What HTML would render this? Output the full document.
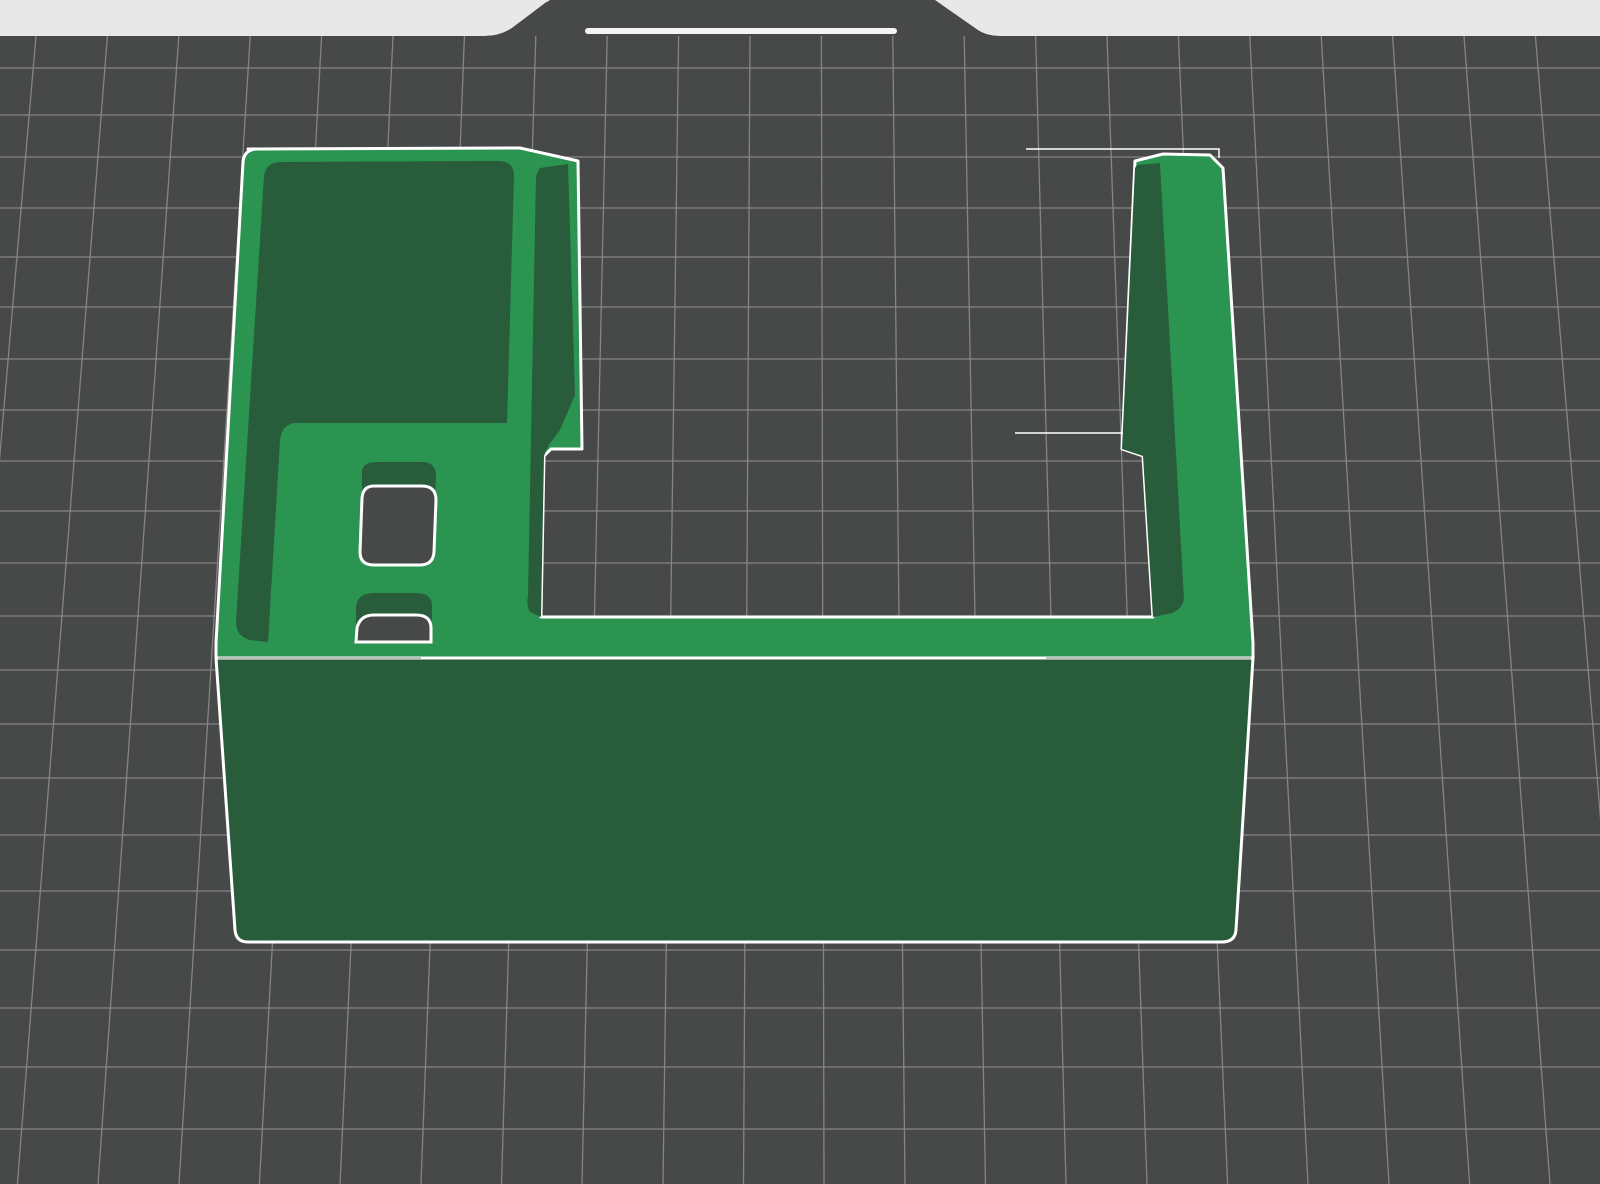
<!DOCTYPE html>
<html><head><meta charset="utf-8"><style>
html,body{margin:0;padding:0;background:#474848;width:1600px;height:1184px;overflow:hidden}
svg{display:block}
</style></head><body>
<svg width="1600" height="1184" viewBox="0 0 1600 1184" xmlns="http://www.w3.org/2000/svg">
<rect width="1600" height="1184" fill="#474848"/>
<g stroke="#8c8c8c" stroke-width="1.3" opacity="0.9">
<line x1="36" y1="36" x2="-63" y2="1184"/>
<line x1="107.4" y1="36" x2="17.4" y2="1184"/>
<line x1="178.8" y1="36" x2="98" y2="1184"/>
<line x1="250.2" y1="36" x2="179" y2="1184"/>
<line x1="321.6" y1="36" x2="259.4" y2="1184"/>
<line x1="393" y1="36" x2="340" y2="1184"/>
<line x1="464.4" y1="36" x2="421" y2="1184"/>
<line x1="535.8" y1="36" x2="501.5" y2="1184"/>
<line x1="607.2" y1="36" x2="582" y2="1184"/>
<line x1="678.6" y1="36" x2="663" y2="1184"/>
<line x1="750" y1="36" x2="743.5" y2="1184"/>
<line x1="821.4" y1="36" x2="824" y2="1184"/>
<line x1="892.8" y1="36" x2="905" y2="1184"/>
<line x1="964.2" y1="36" x2="985.5" y2="1184"/>
<line x1="1035.6" y1="36" x2="1066" y2="1184"/>
<line x1="1107" y1="36" x2="1147" y2="1184"/>
<line x1="1178.4" y1="36" x2="1227.6" y2="1184"/>
<line x1="1249.8" y1="36" x2="1308" y2="1184"/>
<line x1="1321.2" y1="36" x2="1389" y2="1184"/>
<line x1="1392.6" y1="36" x2="1469.6" y2="1184"/>
<line x1="1464" y1="36" x2="1550" y2="1184"/>
<line x1="1535.4" y1="36" x2="1631" y2="1184"/>
<line x1="0" y1="68" x2="1600" y2="68"/>
<line x1="0" y1="115" x2="1600" y2="115"/>
<line x1="0" y1="157" x2="1600" y2="157"/>
<line x1="0" y1="208" x2="1600" y2="208"/>
<line x1="0" y1="257" x2="1600" y2="257"/>
<line x1="0" y1="307" x2="1600" y2="307"/>
<line x1="0" y1="359" x2="1600" y2="359"/>
<line x1="0" y1="410" x2="1600" y2="410"/>
<line x1="0" y1="461" x2="1600" y2="461"/>
<line x1="0" y1="511" x2="1600" y2="511"/>
<line x1="0" y1="563" x2="1600" y2="563"/>
<line x1="0" y1="616" x2="1600" y2="616"/>
<line x1="0" y1="670" x2="1600" y2="670"/>
<line x1="0" y1="724" x2="1600" y2="724"/>
<line x1="0" y1="778" x2="1600" y2="778"/>
<line x1="0" y1="835" x2="1600" y2="835"/>
<line x1="0" y1="891" x2="1600" y2="891"/>
<line x1="0" y1="950" x2="1600" y2="950"/>
<line x1="0" y1="1008" x2="1600" y2="1008"/>
<line x1="0" y1="1067" x2="1600" y2="1067"/>
<line x1="0" y1="1129" x2="1600" y2="1129"/>
</g>
<path d="M0 0 H1600 V36 H1000 Q985 36 975 28 L935 0 H550 L512 28 Q500 36 485 36 H0 Z" fill="#e8e8e8"/>
<path d="M485 36 Q500 36 512 28 L545 3 Q549 0 555 0 H928 Q934 0 938 3 L975 28 Q985 36 1000 36 Z" fill="#474848"/>
<rect x="585" y="28" width="312" height="6" rx="3" fill="#f4f4f4"/>
<path d="M216 658 H1253 L1236 930 Q1235 942 1222 942 H248 Q236 942 235 930 Z" fill="#285c3b" stroke="#fff" stroke-width="3"/>
<path d="M248 149 L520 148 L578 161 L582 449 L551 449 L544 456 L541 617 L1153 617 L1143 456 L1122 449 L1135 161 L1163 154 L1210 155 L1223 168 L1253 643 L1253 658 L216 658 L216 643 L243 162 Q244 150 256 149 Z" fill="#2a9450" stroke="#fff" stroke-width="3" stroke-linejoin="round"/>
<path d="M282 162 L500 161 Q514 162 514 176 L507 423 L295 423 Q282 424 280 440 L268 642 L250 640 Q236 636 236 622 L264 176 Q266 162 282 162 Z" fill="#285c3b"/>
<path d="M540 168 L568 164 L575 395 L560 430 L548 446 L544 456 L541 617 L530 612 Q526 606 528 596 L536 176 Z" fill="#285c3b"/>
<path d="M1137 165 L1160 163 L1184 600 Q1180 612 1168 614 L1153 617 L1143 456 L1122 449 L1135 168 Z" fill="#285c3b"/>
<path d="M362 470 Q364 462 378 462 H422 Q436 462 436 476 L435 498 L362 498 Z" fill="#285c3b"/>
<path d="M374 486 H422 Q436 486 436 500 L434 552 Q433 565 420 565 H374 Q360 565 360 552 L362 498 Q363 486 374 486 Z" fill="#474848" stroke="#fff" stroke-width="3"/>
<path d="M356 606 Q358 593 374 593 H416 Q432 593 432 606 L432 628 L356 628 Z" fill="#285c3b"/>
<path d="M356 642 L357 628 Q360 615 374 615 H416 Q431 615 431 628 L431 642 Z" fill="#474848" stroke="#fff" stroke-width="3"/>
<line x1="218" y1="658" x2="421" y2="658" stroke="#bfbfbf" stroke-width="2"/>
<line x1="1046" y1="658" x2="1251" y2="658" stroke="#bfbfbf" stroke-width="2"/>
<polyline points="1026,149 1219,149 1219,158" fill="none" stroke="#fff" stroke-width="1.5"/>
<line x1="1015" y1="433" x2="1123" y2="433" stroke="#fff" stroke-width="1.5"/>
</svg>
</body></html>
